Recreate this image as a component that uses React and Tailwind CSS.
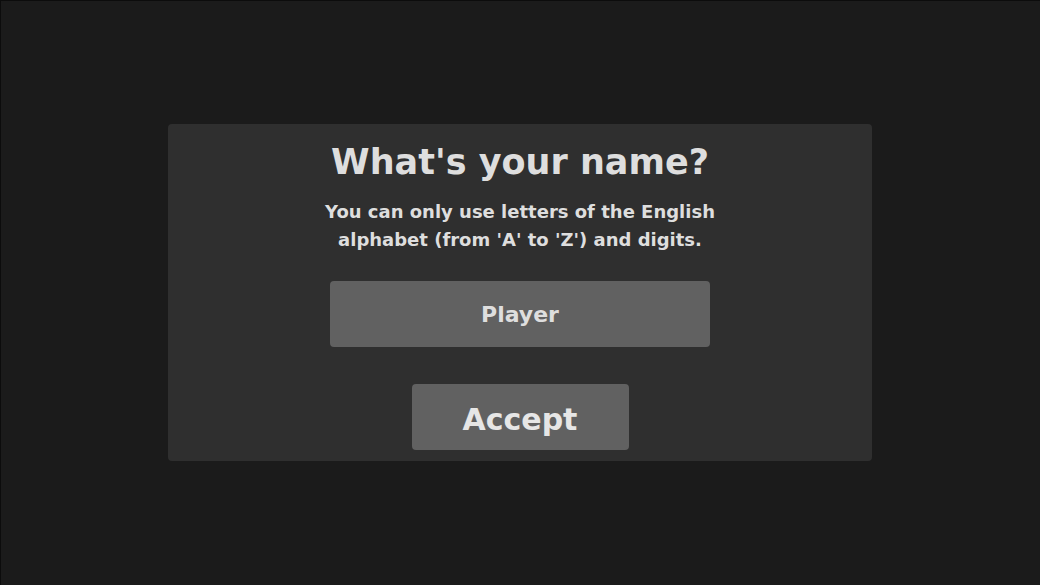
export default function App() {
  const font = { fontFamily: '"Comic Sans MS", "DejaVu Sans", "Liberation Sans", sans-serif' };
  return (
    <div className="w-[1040px] h-[585px] bg-[#1b1b1b] shadow-[inset_1px_1px_0_#0c0c0c] flex items-center justify-center" style={font}>
      <div className="w-[704px] h-[337px] bg-[#2f2f2f] rounded-[4px] flex flex-col items-center pt-[14px]">
        <h1 className="text-[35px] leading-[48px] font-bold text-[#dedede]">What's your name?</h1>
        <p className="mt-[12px] text-[18px] leading-[28px] font-bold text-[#dedede] text-center w-[430px]">
          You can only use letters of the English alphabet (from 'A' to 'Z') and digits.
        </p>
        <div className="mt-[27px] w-[380px] h-[66px] bg-[#616161] rounded-[4px] flex items-center justify-center text-[22px] font-bold text-[#dedede]">
          Player
        </div>
        <button className="mt-[37px] w-[217px] h-[66px] bg-[#616161] rounded-[4px] flex items-center justify-center text-[30px] font-bold text-[#e6e6e6] pt-[4px]">
          Accept
        </button>
      </div>
    </div>
  );
}
